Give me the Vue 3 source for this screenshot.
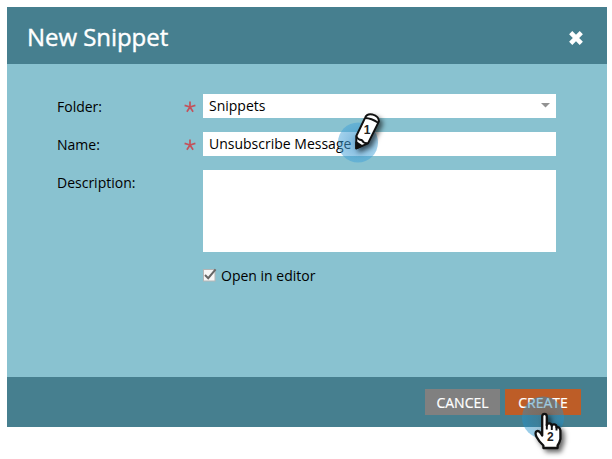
<script setup>
import { ref } from 'vue'

const folder = ref('Snippets')
const name = ref('Unsubscribe Message')
</script>

<template>
  <main class="page">
    <section class="dialog">
      <header class="head">
        <h1 class="title">New Snippet</h1>
        <svg class="close" width="16" height="16" viewBox="0 0 16 16">
          <path d="M2.7 2.7 L13.3 13.3 M13.3 2.7 L2.7 13.3" stroke="#fff" stroke-width="4.5" />
        </svg>
      </header>

      <div class="body">
        <div class="row">
          <span class="label">Folder:</span>
          <svg class="star" width="12" height="12" viewBox="0 0 12 12">
            <path d="M6 6V.4M6 6L.6 4.4M6 6L11.4 4.4M6 6L2.9 10.8M6 6L9.1 10.8" />
          </svg>
          <div class="field select">
            <span>{{ folder }}</span>
            <svg width="9" height="5" viewBox="0 0 9 5"><path d="M0 0H9L4.5 4.6Z" fill="#929292" /></svg>
          </div>
        </div>
        <div class="row">
          <span class="label">Name:</span>
          <svg class="star" width="12" height="12" viewBox="0 0 12 12">
            <path d="M6 6V.4M6 6L.6 4.4M6 6L11.4 4.4M6 6L2.9 10.8M6 6L9.1 10.8" />
          </svg>
          <div class="field">{{ name }}</div>
        </div>
        <div class="row">
          <span class="label">Description:</span>
          <div class="field area"></div>
        </div>
        <div class="check">
          <svg width="15" height="14" viewBox="0 0 15 14">
            <rect x=".5" y="1.5" width="11.5" height="11.5" fill="#f6f6f6" stroke="#b5b5b5" />
            <path d="M2 7L5.2 10.2L12.6 1.4" fill="none" stroke="#666" stroke-width="2" />
          </svg>
          <span>Open in editor</span>
        </div>
      </div>

      <footer class="foot">
        <span class="btn">CANCEL</span>
        <span class="btn primary">CREATE</span>
      </footer>
    </section>

    <div class="marker first">
      <svg width="70" height="70" viewBox="0 0 70 70">
        <defs>
          <radialGradient id="halo1">
            <stop offset="0" stop-color="#3c8fc6" stop-opacity=".75" />
            <stop offset=".5" stop-color="#3c98d0" stop-opacity=".58" />
            <stop offset="1" stop-color="#3fa0d8" stop-opacity=".48" />
          </radialGradient>
        </defs>
        <circle cx="28" cy="42.5" r="20" fill="url(#halo1)" />
        <g class="shade" stroke="#111" stroke-width="2" stroke-linejoin="round">
          <path d="M26.3 48.3L26.3 36L35.2 17.6Q36.8 13.4 42.3 14.4Q49.4 16.6 48.8 21.6L38 43.4Z" fill="#fff" />
          <path d="M26.4 36.4Q28 40.2 31.8 40Q33.6 43.6 37.8 43.2M35.1 18Q41.4 18.2 48.2 22.8" fill="none" stroke-width="1.8" />
          <path d="M26.3 48.3L26.3 42.3L31.6 45.9Z" fill="#111" />
        </g>
        <text x="37" y="34.4" text-anchor="middle" font-size="12">1</text>
      </svg>
    </div>

    <div class="marker second">
      <svg width="70" height="80" viewBox="0 0 70 80">
        <defs>
          <radialGradient id="halo2">
            <stop offset="0" stop-color="#3a7797" stop-opacity=".5" />
            <stop offset=".6" stop-color="#2c86b4" stop-opacity=".46" />
            <stop offset="1" stop-color="#1f93d0" stop-opacity=".46" />
          </radialGradient>
        </defs>
        <circle cx="25" cy="38.5" r="21" fill="url(#halo2)" />
        <path
          class="shade"
          d="M24.2 54V37.5Q24.2 34.8 26.5 34.8T28.8 37.5V46.5Q29 44.2 31.3 44.3T33.8 46.8Q34.2 45 36.4 45.4T38.6 48.4Q41.6 47.5 42.4 51.5V60Q41.5 64 39.6 66.5V69H25.4V66.5Q21 62.5 18.6 58Q16.6 54.2 18.4 52.4Q21 50.6 24.2 56.5Z"
          fill="#fff" stroke="#111" stroke-width="2.3" stroke-linejoin="round"
        />
        <path d="M28.8 45V50.5M33.8 45.5V51M38.5 47.5V51.5" stroke="#111" stroke-width="1.9" />
        <text x="32.3" y="62.3" text-anchor="middle" font-size="12">2</text>
      </svg>
    </div>
  </main>
</template>

<style>
body {
  background: #fff;
}
</style>

<style scoped>
.page {
  position: relative;
  box-sizing: border-box;
  width: 612px;
  height: 459px;
  padding: 7px 5px 32px 7px;
  overflow: hidden;
  font-family: "Open Sans", "Noto Sans", sans-serif;
  font-size: 14px;
  color: #000;
}
.dialog {
  display: flex;
  flex-direction: column;
  height: 420px;
  background: #89c2d0;
}
.head {
  display: flex;
  align-items: center;
  justify-content: space-between;
  height: 57px;
  padding: 0 23px 0 20px;
  background: #467f8f;
}
.title {
  margin: 3px 0 0;
  font-size: 24px;
  font-weight: 400;
  line-height: 34px;
  letter-spacing: -0.05px;
  color: #fff;
  -webkit-text-stroke: 0.4px #fff;
}
.close {
  margin-top: 4px;
}
.body {
  flex: 1;
  display: flex;
  flex-direction: column;
  gap: 14px;
  padding: 30px 51px 0 50px;
}
.row {
  display: grid;
  grid-template-columns: 127px 19px 353px;
}
.label {
  height: 24px;
  line-height: 26px;
}
.star {
  margin-top: 7px;
  fill: none;
  stroke: #c4515a;
  stroke-width: 1.7;
}
.field {
  box-sizing: border-box;
  grid-column: 3;
  height: 24px;
  padding: 0 6px;
  line-height: 24px;
  background: #fff;
}
.select {
  display: flex;
  align-items: center;
  justify-content: space-between;
}
.select svg {
  margin-bottom: 2px;
}
.area {
  height: 82px;
}
.check {
  display: flex;
  align-items: center;
  gap: 3px;
  margin: 0 0 0 146px;
  line-height: 20px;
}
.check svg {
  margin-bottom: 2px;
}
.foot {
  display: flex;
  align-items: center;
  justify-content: flex-end;
  gap: 6px;
  height: 50px;
  padding-right: 26px;
  background: #467f8f;
}
.btn {
  width: 75px;
  height: 26px;
  line-height: 27px;
  text-align: center;
  color: #fff;
  background: #808080;
  -webkit-text-stroke: 0.2px #fff;
}
.primary {
  width: 76px;
  margin-left: -1px;
  background: #bd5d27;
}
.marker {
  position: absolute;
}
.marker svg {
  display: block;
}
.marker text {
  font-family: "Liberation Sans", sans-serif;
  font-weight: 700;
  fill: #222;
}
.first {
  left: 330px;
  top: 100px;
}
.second {
  left: 518px;
  top: 379px;
}
.shade {
  filter: drop-shadow(3px 3px 2.5px rgba(0, 0, 0, 0.6));
}
</style>
